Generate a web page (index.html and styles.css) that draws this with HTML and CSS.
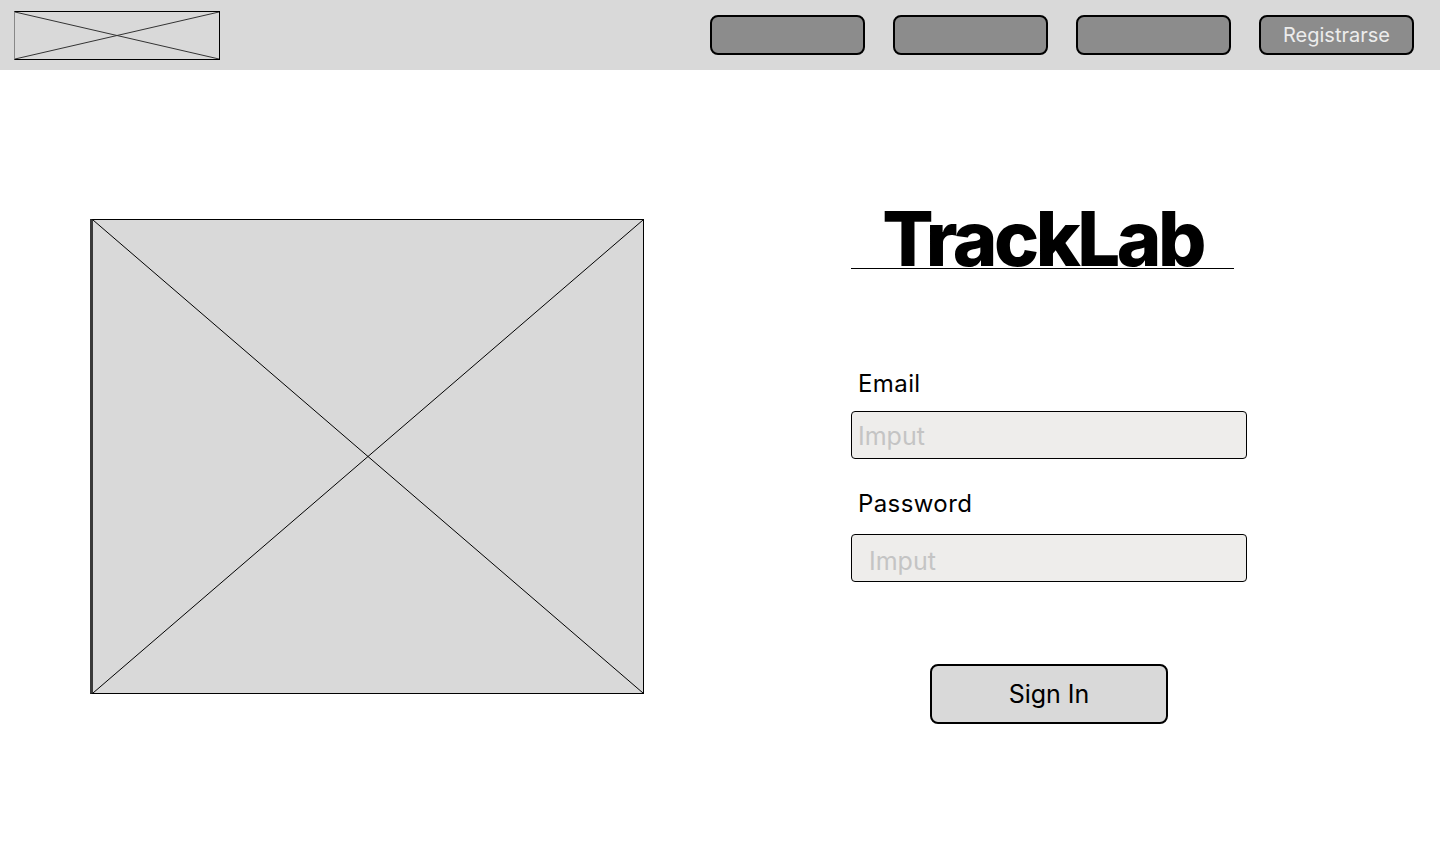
FILE: index.html
```html
<!DOCTYPE html>
<html lang="en">
<head>
    <meta charset="UTF-8">
    <meta name="viewport" content="width=device-width, initial-scale=1.0">
    <title>TrackLab</title>
    <link rel="stylesheet" href="styles.css">
</head>
<body>
    <header>
        <div class="logo">
            <svg viewBox="0 0 100 100" preserveAspectRatio="none">
                <line x1="0" y1="0" x2="100" y2="100" vector-effect="non-scaling-stroke"/>
                <line x1="100" y1="0" x2="0" y2="100" vector-effect="non-scaling-stroke"/>
            </svg>
        </div>
        <nav>
            <a href="#" class="nav-btn"></a>
            <a href="#" class="nav-btn"></a>
            <a href="#" class="nav-btn"></a>
            <a href="#" class="nav-btn">Registrarse</a>
        </nav>
    </header>
    <main>
        <div class="picture">
            <svg viewBox="0 0 100 100" preserveAspectRatio="none">
                <line x1="0" y1="0" x2="100" y2="100" vector-effect="non-scaling-stroke"/>
                <line x1="100" y1="0" x2="0" y2="100" vector-effect="non-scaling-stroke"/>
            </svg>
        </div>
        <div class="login">
            <h1 class="title">TrackLab</h1>
            <form class="form">
                <label class="label label-email" for="email">Email</label>
                <input class="input input-email" id="email" type="text" placeholder="Imput">
                <label class="label label-password" for="password">Password</label>
                <input class="input input-password" id="password" type="password" placeholder="Imput">
                <button type="button" class="signin">Sign In</button>
            </form>
        </div>
    </main>
</body>
</html>
```

FILE: styles.css
```css
body {
    font-family: Inter, "Noto Sans", sans-serif;
    margin: 0;
    padding: 0;
    background-color: #ffffff;
    color: #000;
}
header {
    background-color: #d9d9d9;
    height: 70px;
    padding: 0 26px 0 14px;
    display: flex;
    justify-content: space-between;
    align-items: flex-start;
    box-sizing: border-box;
}
.logo {
    margin-top: 11px;
    width: 206px;
    height: 49px;
    border: 1px solid #000;
    border-left-color: #888;
    box-sizing: border-box;
}
.logo svg,
.picture svg {
    display: block;
    width: 100%;
    height: 100%;
}
.logo line,
.picture line {
    stroke: #000;
    stroke-width: 1;
}
.logo line {
    stroke: #333;
}
nav {
    display: flex;
    gap: 28px;
    margin-top: 15px;
}
.nav-btn {
    display: flex;
    align-items: center;
    justify-content: center;
    width: 155px;
    height: 40px;
    box-sizing: border-box;
    background-color: #8c8c8c;
    border: 2px solid #000;
    border-radius: 8px;
    color: #ececec;
    font-size: 20px;
    text-decoration: none;
}
main {
    display: flex;
    align-items: flex-start;
    padding-left: 90px;
    gap: 207px;
}
.picture {
    margin-top: 149px;
    width: 554px;
    height: 475px;
    background-color: #d9d9d9;
    border: 1px solid #000;
    border-left: 3px solid #3a3a3a;
    box-sizing: border-box;
}
.login {
    margin-top: 138px;
    width: 396px;
}
.title {
    margin: 0;
    width: 383px;
    font-size: 76px;
    font-weight: 800;
    line-height: 60px;
    letter-spacing: -3.5px;
    text-align: center;
    border-bottom: 1px solid #000;
}
.form {
    display: flex;
    flex-direction: column;
}
.label {
    font-size: 24px;
    line-height: 26px;
    letter-spacing: 0.4px;
    padding-left: 7px;
}
.label-email {
    margin-top: 102px;
}
.label-password {
    margin-top: 32px;
}
.input {
    width: 396px;
    height: 48px;
    box-sizing: border-box;
    margin-top: 14px;
    background-color: #eeedeb;
    border: 1px solid #000;
    border-radius: 4px;
    font-family: Inter, "Noto Sans", sans-serif;
    font-size: 25px;
    padding: 2px 6px 0;
    outline: none;
}
.input-password {
    margin-top: 17px;
    padding: 6px 17px 0;
}
.input::placeholder {
    color: #c4c4c4;
}
.signin {
    align-self: center;
    margin-top: 82px;
    width: 238px;
    height: 60px;
    background-color: #d9d9d9;
    border: 2px solid #000;
    border-radius: 8px;
    font-family: Inter, "Noto Sans", sans-serif;
    font-size: 25px;
    color: #000;
    cursor: pointer;
}
```
